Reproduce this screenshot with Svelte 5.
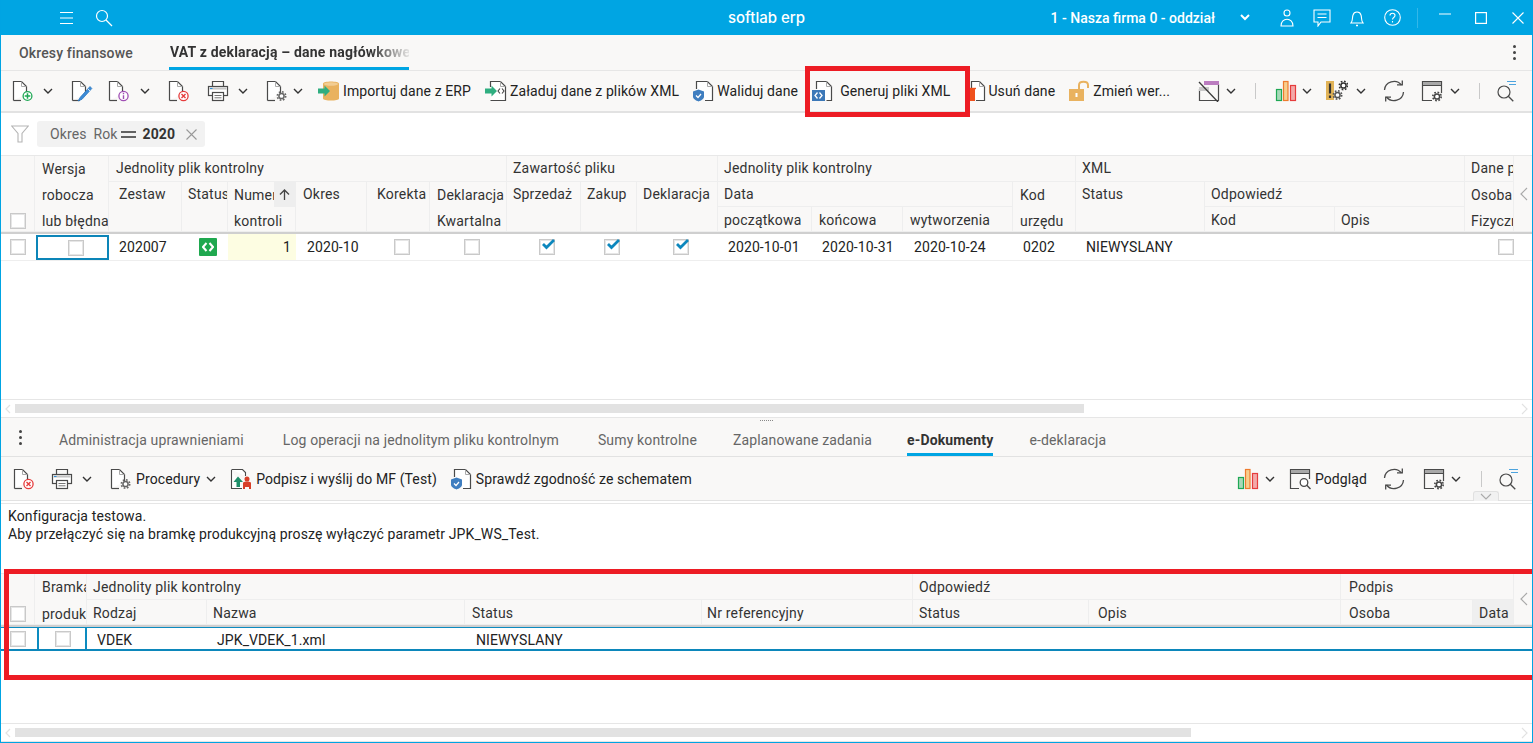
<script>
  const topHead = [
    { t: '', a: '1/1/4/2', cb: true },
    { t: 'Wersja\nrobocza\nlub błędna', a: '1/2/4/3', c: 'p7 l26' },
    { t: 'Jednolity plik kontrolny', a: '1/3/2/9', c: 'p7' },
    { t: 'Zestaw', a: '2/3/4/4', c: 'p10' },
    { t: 'Status', a: '2/4/4/5' },
    { t: 'Numer\nkontroli', a: '2/5/4/6', sort: true, c: 'l26' },
    { t: 'Okres', a: '2/6/4/7', c: 'p7' },
    { t: 'Korekta', a: '2/7/4/8', c: 'p10' },
    { t: 'Deklaracja\nKwartalna', a: '2/8/4/9', c: 'p7 l26' },
    { t: 'Zawartość pliku', a: '1/9/2/12' },
    { t: 'Sprzedaż', a: '2/9/4/10' },
    { t: 'Zakup', a: '2/10/4/11' },
    { t: 'Deklaracja', a: '2/11/4/12' },
    { t: 'Jednolity plik kontrolny', a: '1/12/2/16' },
    { t: 'Data', a: '2/12/3/15' },
    { t: 'początkowa', a: '3/12/4/13', c: 'r3' },
    { t: 'końcowa', a: '3/13/4/14', c: 'p7 r3' },
    { t: 'wytworzenia', a: '3/14/4/15', c: 'p7 r3' },
    { t: 'Kod\nurzędu', a: '2/15/4/16', c: 'p7 l26' },
    { t: 'XML', a: '1/16/2/19' },
    { t: 'Status', a: '2/16/4/17' },
    { t: 'Odpowiedź', a: '2/17/3/19' },
    { t: 'Kod', a: '3/17/4/18', c: 'r3' },
    { t: 'Opis', a: '3/18/4/19', c: 'r3' },
    { t: 'Dane p', a: '1/19/2/20' },
    { t: 'Osoba\nFizyczna', a: '2/19/4/20', c: 'l26' },
    { t: '', a: '1/20/4/21', gut: true }
  ];
  const botHead = [
    { t: '', a: '1/1/3/2', cb: true },
    { t: 'Bramka\nprodukcyjna', a: '1/2/3/3', c: 'p7' },
    { t: 'Jednolity plik kontrolny', a: '1/3/2/7' },
    { t: 'Rodzaj', a: '2/3/3/4' },
    { t: 'Nazwa', a: '2/4/3/5' },
    { t: 'Status', a: '2/5/3/6', c: 'p7' },
    { t: 'Nr referencyjny', a: '2/6/3/7', c: 'p5' },
    { t: 'Odpowiedź', a: '1/7/2/9' },
    { t: 'Status', a: '2/7/3/8' },
    { t: 'Opis', a: '2/8/3/9', c: 'p9' },
    { t: 'Podpis', a: '1/9/2/11', c: 'p8' },
    { t: 'Osoba', a: '2/9/3/10', c: 'p8' },
    { t: 'Data', a: '2/10/3/11', c: 'act' },
    { t: '', a: '1/11/3/12', gut: true }
  ];
  const bottomTabs = [
    { t: 'Administracja uprawnieniami', ml: 37 },
    { t: 'Log operacji na jednolitym pliku kontrolnym', ml: 39 },
    { t: 'Sumy kontrolne', ml: 39 },
    { t: 'Zaplanowane zadania', ml: 36 },
    { t: 'e-Dokumenty', ml: 35, on: true },
    { t: 'e-deklaracja', ml: 36 }
  ];
</script>

{#snippet chev()}
  <svg class="ic" width="10" height="6" viewBox="0 0 10 6"><path d="M1 1l4 4 4-4" fill="none" stroke="#333" stroke-width="1.4"/></svg>
{/snippet}
{#snippet docBase()}
  <path d="M1.5 20.5V1.5h8l5 5v7" fill="#fff" stroke="#4a4a4a" stroke-width="1.2"/>
  <path d="M9.5 1.5v5h5" fill="none" stroke="#aaa" stroke-width="1"/>
  <path d="M1.5 20.5H9" stroke="#4a4a4a" stroke-width="1.2"/>
{/snippet}
{#snippet gear(x, y, c = '#666')}
  <circle cx={x} cy={y} r="2.6" fill="#fff" stroke={c} stroke-width="1.5"/>
  <circle cx={x} cy={y} r="4.2" fill="none" stroke={c} stroke-width="1.6" stroke-dasharray="1.7 1.6"/>
{/snippet}
{#snippet iNew()}
  <svg class="ic" width="22" height="22" viewBox="0 0 22 22">
    {@render docBase()}
    <circle cx="15.5" cy="16" r="4.4" fill="#fff" stroke="#1fa855" stroke-width="1.3"/>
    <path d="M15.500 13.200v5.600M12.700 16h5.600" stroke="#1fa855" stroke-width="1.5"/>
  </svg>
{/snippet}
{#snippet iEdit()}
  <svg class="ic" width="22" height="22" viewBox="0 0 22 22">
    {@render docBase()}
    <path d="M19 6.500L9.500 17l-2.500 4 4-1.700L20.800 8.500z" fill="#3d8bd6" stroke="#2b78c2" stroke-width=".8"/>
    <path d="M17 9l2 2" stroke="#fff" stroke-width=".8"/>
  </svg>
{/snippet}
{#snippet iInfo()}
  <svg class="ic" width="22" height="22" viewBox="0 0 22 22">
    {@render docBase()}
    <circle cx="15.500" cy="16" r="4.600" fill="#fff" stroke="#a04fb4" stroke-width="1.300"/>
    <path d="M15.500 15.200v3.800M15.500 12.800v1.400" stroke="#a04fb4" stroke-width="1.400"/>
  </svg>
{/snippet}
{#snippet iDel()}
  <svg class="ic" width="22" height="22" viewBox="0 0 22 22">
    {@render docBase()}
    <circle cx="15.500" cy="16" r="4.600" fill="#fff" stroke="#e63c3c" stroke-width="1.300"/>
    <path d="M13.500 14l4 4M17.500 14l-4 4" stroke="#e63c3c" stroke-width="1.400"/>
  </svg>
{/snippet}
{#snippet iPrint()}
  <svg class="ic" width="22" height="22" viewBox="0 0 22 22">
    <path d="M5.500 6V1.500h11V6" fill="none" stroke="#4a4a4a" stroke-width="1.200"/>
    <rect x="1.500" y="6.500" width="19" height="9" fill="#fff" stroke="#4a4a4a" stroke-width="1.200"/>
    <rect x="2.500" y="7.500" width="17" height="2" fill="#c4c4c4"/>
    <rect x="3" y="8" width="2.500" height="1" fill="#2f8fd8"/>
    <rect x="5.500" y="12.500" width="11" height="8" fill="#fff" stroke="#4a4a4a" stroke-width="1.200"/>
    <path d="M7.500 15.500h7M7.500 17.800h7" stroke="#777" stroke-width="1"/>
  </svg>
{/snippet}
{#snippet iSet()}
  <svg class="ic" width="22" height="22" viewBox="0 0 22 22">
    {@render docBase()}
    {@render gear(15.5, 16)}
  </svg>
{/snippet}
{#snippet arrow()}
  <path d="M0 8.500h6.500V5.500L12 11l-5.500 5.500v-3H0z" fill="#2fae80"/>
{/snippet}
{#snippet iImport()}
  <svg class="ic" width="22" height="22" viewBox="0 0 22 22">
    <path d="M5 3.500C5 .8 21 .8 21 3.500v15c0 2.700-16 2.700-16 0z" fill="#e9b25f"/>
    <ellipse cx="13" cy="4" rx="7" ry="1.700" fill="#f2cd92"/>
    {@render arrow()}
  </svg>
{/snippet}
{#snippet iLoad()}
  <svg class="ic" width="22" height="22" viewBox="0 0 22 22">
    <path d="M5.500 20.500H20.500V6.500l-5-5h-10V7" fill="#fff" stroke="#4a4a4a" stroke-width="1.200"/>
    <path d="M15.500 1.500v5h5" fill="none" stroke="#aaa"/>
    <path d="M15 8.500l-2 2.500 2 2.500M17 8.500l2 2.500-2 2.500" fill="none" stroke="#444" stroke-width="1.100"/>
    {@render arrow()}
  </svg>
{/snippet}
{#snippet shield()}
  <path d="M1 11.500l5.500-2 5.500 2v5c0 2.500-3 4-5.500 5-2.500-1-5.500-2.500-5.500-5z" fill="#3f7ec0"/>
  <path d="M4 15.500l2 2 3-3.500" fill="none" stroke="#fff" stroke-width="1.200"/>
{/snippet}
{#snippet iValid()}
  <svg class="ic" width="22" height="22" viewBox="0 0 22 22">
    <path d="M4.500 9V1.500h11l5 5v14H13" fill="#fff" stroke="#4a4a4a" stroke-width="1.200"/>
    <path d="M15.500 1.500v5h5" fill="none" stroke="#aaa"/>
    {@render shield()}
  </svg>
{/snippet}
{#snippet iGen()}
  <svg class="ic" width="22" height="22" viewBox="0 0 22 22">
    <path d="M5.500 9V1.500h10l5 5v14h-5" fill="#fff" stroke="#4a4a4a" stroke-width="1.200"/>
    <path d="M15.500 1.500v5h5" fill="none" stroke="#aaa"/>
    <rect x="1" y="10" width="13" height="11" fill="#3c78b8"/>
    <path d="M6.500 12.500l-2.500 3 2.500 3M8.500 12.500l2.500 3-2.500 3" fill="none" stroke="#fff" stroke-width="1.300"/>
  </svg>
{/snippet}
{#snippet iTrash()}
  <svg class="ic" width="22" height="22" viewBox="0 0 22 22">
    <path d="M7.500 9V1.500h8l5 5v14H12" fill="#fff" stroke="#4a4a4a" stroke-width="1.200"/>
    <path d="M15.500 1.500v5h5" fill="none" stroke="#aaa"/>
    <rect x="5" y="9" width="6" height="12" fill="#f0521e"/>
    <path d="M2 8.500h10" stroke="#f0521e" stroke-width="1.400"/>
  </svg>
{/snippet}
{#snippet iLock()}
  <svg class="ic" width="22" height="22" viewBox="0 0 22 22">
    <rect x="1" y="9" width="15" height="12" fill="#e9b25f"/>
    <path d="M11 9V5c0-4.500 9-4.500 9 0v3" fill="none" stroke="#e9b25f" stroke-width="2"/>
    <rect x="7.500" y="13" width="2" height="4" fill="#fff"/>
  </svg>
{/snippet}
{#snippet iGridOff()}
  <svg class="ic" width="22" height="22" viewBox="0 0 22 22">
    <path d="M1.500 9v11.500h19V4.500H8" fill="none" stroke="#4a4a4a" stroke-width="1.200"/>
    <rect x="6" y="1" width="15" height="4" fill="#bb7dc0"/>
    <rect x="1" y="7" width="10" height="4" fill="#c9c9c9"/>
    <path d="M1 2l19 20" stroke="#3a3a3a" stroke-width="1.300"/>
  </svg>
{/snippet}
{#snippet iBars()}
  <svg class="ic" width="22" height="22" viewBox="0 0 22 22">
    <rect x="1.500" y="9.500" width="5" height="11" fill="#a6d9b8" stroke="#1fa855" stroke-width="1.200"/>
    <rect x="8.500" y="1.500" width="4.500" height="19" fill="#f7ce8d" stroke="#ee7b2e" stroke-width="1.200"/>
    <rect x="15.500" y="5.500" width="5" height="15" fill="#f3a9a9" stroke="#e63c3c" stroke-width="1.200"/>
  </svg>
{/snippet}
{#snippet iWarn()}
  <svg class="ic" width="22" height="22" viewBox="0 0 22 22">
    <rect x="0" y="1" width="8" height="19" fill="#e2b458"/>
    <path d="M4 3.500v10M4 15.500v2.500" stroke="#333" stroke-width="2.200"/>
    {@render gear(11.5, 15, '#555')}
    {@render gear(17.5, 5.5, '#333')}
  </svg>
{/snippet}
{#snippet iRefresh()}
  <svg class="ic" width="22" height="22" viewBox="0 0 22 22">
    <path d="M1.500 10A9.500 9 0 0 1 18.500 5" fill="none" stroke="#4a4a4a" stroke-width="1.300"/>
    <path d="M20.500 12A9.500 9 0 0 1 3.500 17" fill="none" stroke="#4a4a4a" stroke-width="1.300"/>
    <path d="M14 4.800h5.300V0.500" fill="none" stroke="#4a4a4a" stroke-width="1.300"/>
    <path d="M8 17.200H2.700v4.300" fill="none" stroke="#4a4a4a" stroke-width="1.300"/>
  </svg>
{/snippet}
{#snippet iWin()}
  <svg class="ic" width="22" height="22" viewBox="0 0 22 22">
    <path d="M11 20.500H1.500v-19h19V13" fill="none" stroke="#4a4a4a" stroke-width="1.200"/>
    <rect x="2" y="2" width="18" height="3.500" fill="#a8a8a8"/>
    <path d="M1.500 5.500h19" stroke="#4a4a4a" stroke-width="1"/>
    {@render gear(16, 16.5, '#444')}
  </svg>
{/snippet}
{#snippet iPreview()}
  <svg class="ic" width="22" height="22" viewBox="0 0 22 22">
    <path d="M10 20.500H1.500v-19h19V11" fill="none" stroke="#4a4a4a" stroke-width="1.200"/>
    <rect x="2" y="2" width="18" height="3.500" fill="#a8a8a8"/>
    <path d="M1.500 5.500h19" stroke="#4a4a4a" stroke-width="1"/>
    <circle cx="15" cy="14.500" r="3.800" fill="#fff" stroke="#4a4a4a" stroke-width="1.300"/>
    <path d="M17.800 17.300l3.700 3.700" stroke="#4a4a4a" stroke-width="1.400"/>
  </svg>
{/snippet}
{#snippet iSearch()}
  <svg class="ic" width="22" height="22" viewBox="0 0 22 22">
    <circle cx="9" cy="12" r="6" fill="none" stroke="#4a4a4a" stroke-width="1.200"/>
    <path d="M13.300 16.300l5 5" stroke="#4a4a4a" stroke-width="1.300"/>
    <path d="M12 1.500h9M14 4.500h7" stroke="#4da4de" stroke-width="1.200"/>
  </svg>
{/snippet}
{#snippet iSign()}
  <svg class="ic" width="22" height="22" viewBox="0 0 22 22">
    <path d="M1.500 2v18.500H12M1.500 1.500h11l3 3V8" fill="#fff" stroke="#4a4a4a" stroke-width="1.100"/>
    <path d="M8 8.500l5 5.500H10v5H6.500v-5H3.500z" fill="#1f8f6a"/>
    <circle cx="17" cy="11" r="2.500" fill="#d8402a"/>
    <path d="M13 21v-6c0-2 8-2 8 0v6h-2v-2h-4v2z" fill="#d8402a"/>
  </svg>
{/snippet}

{#snippet box(on = false)}
  <span class="box">
    {#if on}
      <svg class="tick" width="15" height="12" viewBox="0 0 15 12"><path d="M2 6l3.500 3.500L13 2" fill="none" stroke="#0c87bd" stroke-width="2.800"/></svg>
    {/if}
  </span>
{/snippet}

{#snippet head(cells, cls)}
  <div class="head {cls}">
    {#each cells as c}
      <div class={['hc', c.c, c.gut && 'gut']} style:grid-area={c.a}>
        {#if c.cb}
          {@render box()}
        {:else if c.gut}
          <svg width="9" height="14" viewBox="0 0 9 14"><path d="M8 1L2 7l6 6" fill="none" stroke="#a9a9a9" stroke-width="1.200"/></svg>
        {:else}
          <span class="ht">{c.t}</span>
        {/if}
        {#if c.sort}
          <span class="sort"><svg width="11" height="11" viewBox="0 0 11 11"><path d="M5.500 11V1.500M1 5.500l4.500-4.500 4.500 4.500" fill="none" stroke="#444" stroke-width="1.300"/></svg></span>
        {/if}
      </div>
    {/each}
  </div>
{/snippet}

{#snippet scrollbar(cls)}
  <div class="scroll">
    <svg width="7" height="10" viewBox="0 0 7 10"><path d="M6 1L2 5l4 4" fill="none" stroke="#e2e2e2" stroke-width="1.200"/></svg>
    <div class="track"><div class="thumb {cls}"></div></div>
    <svg width="7" height="12" viewBox="0 0 7 12"><path d="M1 1l5 5-5 5" fill="none" stroke="#e2e2e2" stroke-width="1.200"/></svg>
  </div>
{/snippet}

<div class="win">
  <header class="top">
    <div class="top-l">
      <svg class="menu" width="14" height="12" viewBox="0 0 14 12"><path d="M0 .5h13M0 6h13M0 11.500h13" stroke="#fff" stroke-width="1"/></svg>
      <svg class="find" width="18" height="18" viewBox="0 0 18 18"><circle cx="7" cy="7" r="5.500" fill="none" stroke="#fff" stroke-width="1.200"/><path d="M11 11l6 6" stroke="#fff" stroke-width="1.200"/></svg>
    </div>
    <div class="title">softlab erp</div>
    <div class="top-r">
      <span class="firm">1 - Nasza firma 0 - oddział</span>
      <svg class="firm-chev" width="10" height="7" viewBox="0 0 10 7"><path d="M1 1l4 4 4-4" fill="none" stroke="#fff" stroke-width="2"/></svg>
      <svg class="t-user" width="14" height="18" viewBox="0 0 14 18"><circle cx="7" cy="4" r="3" fill="none" stroke="#fff" stroke-width="1.100"/><path d="M1 17c0-9 12-9 12 0z" fill="none" stroke="#fff" stroke-width="1.100"/></svg>
      <svg class="t-chat" width="18" height="18" viewBox="0 0 18 18"><path d="M1 1h16v12H8l-3 4v-4H1z" fill="none" stroke="#fff" stroke-width="1.100"/><path d="M4.500 5h9M4.500 8.500h9" stroke="#fff" stroke-width="1"/></svg>
      <svg class="t-bell" width="14" height="18" viewBox="0 0 14 18"><path d="M1 14c2-2 1-5 2-8 1-4 7-4 8 0 1 3 0 6 2 8z" fill="none" stroke="#fff" stroke-width="1.100"/><path d="M6 16.500h2" stroke="#fff" stroke-width="1.400"/></svg>
      <svg class="t-help" width="17" height="17" viewBox="0 0 17 17"><circle cx="8.500" cy="8.500" r="7.800" fill="none" stroke="#fff" stroke-width="1.100"/><path d="M6 6.500c0-3 5-3 5 0 0 2-2.500 2-2.500 4M8.500 12v1.500" fill="none" stroke="#fff" stroke-width="1.100"/></svg>
      <span class="t-sep"></span>
      <svg class="t-min" width="12" height="2" viewBox="0 0 12 2"><path d="M0 1h12" stroke="#cfeefb" stroke-width="1.200"/></svg>
      <svg class="t-max" width="12" height="12" viewBox="0 0 12 12"><rect x=".6" y=".6" width="10.800" height="10.800" fill="none" stroke="#fff" stroke-width="1.200"/></svg>
      <svg class="t-close" width="12" height="12" viewBox="0 0 12 12"><path d="M.5.500l11 11M11.500.500l-11 11" stroke="#fff" stroke-width="1.100"/></svg>
    </div>
  </header>

  <nav class="tabs">
    <span class="tab1">Okresy finansowe</span>
    <span class="tab2"><span class="fade">VAT z deklaracją – dane nagłówkowe</span></span>
    <span class="kebab"><i></i><i></i><i></i></span>
  </nav>

  <div class="bar bar1">
    <span class="g11">{@render iNew()}</span>
    <span class="g9">{@render chev()}</span>
    <span class="g18">{@render iEdit()}</span>
    <span class="g15">{@render iInfo()}</span>
    <span class="g10">{@render chev()}</span>
    <span class="g18">{@render iDel()}</span>
    <span class="g17">{@render iPrint()}</span>
    <span class="g9">{@render chev()}</span>
    <span class="g18">{@render iSet()}</span>
    <span class="g5">{@render chev()}</span>
    <span class="g15">{@render iImport()}</span>
    <span class="g3 tx">Importuj dane z ERP</span>
    <span class="g14">{@render iLoad()}</span>
    <span class="g3 tx">Załaduj dane z plików XML</span>
    <span class="g13">{@render iValid()}</span>
    <span class="g3 tx">Waliduj dane</span>
    <span class="g13">{@render iGen()}</span>
    <span class="g7 tx">Generuj pliki XML</span>
    <span class="g14">{@render iTrash()}</span>
    <span class="g2 tx">Usuń dane</span>
    <span class="g13">{@render iLock()}</span>
    <span class="g3 tx">Zmień wer...</span>
    <span class="g28">{@render iGridOff()}</span>
    <span class="g6">{@render chev()}</span>
    <span class="g19 sep"></span>
    <span class="g19">{@render iBars()}</span>
    <span class="g5">{@render chev()}</span>
    <span class="g14">{@render iWarn()}</span>
    <span class="g8">{@render chev()}</span>
    <span class="g17">{@render iRefresh()}</span>
    <span class="g16">{@render iWin()}</span>
    <span class="g7">{@render chev()}</span>
    <span class="g19 sep"></span>
    <span class="g15">{@render iSearch()}</span>
  </div>

  <div class="filter">
    <svg width="18" height="18" viewBox="0 0 18 18"><path d="M.7 1h16.600l-6.300 7.500v8.500h-4v-8.500z" fill="none" stroke="#b5b5b5" stroke-width="1.100"/></svg>
    <div class="chip">
      <span class="c-a">Okres</span><span class="c-b">Rok</span>
      <svg class="eq" width="15" height="7" viewBox="0 0 15 7"><path d="M0 1h15M0 6h15" stroke="#333" stroke-width="1.300"/></svg>
      <b>2020</b>
      <svg class="cx" width="11" height="11" viewBox="0 0 11 11"><path d="M.5.500l10 10M10.500.500l-10 10" stroke="#999" stroke-width="1.100"/></svg>
    </div>
  </div>

  <section class="grid-top">
    {@render head(topHead, 'cols-a rows-3')}
    <div class="row cols-a">
      <div class="dc c1">{@render box()}</div>
      <div class="dc c2 focus">{@render box()}</div>
      <div class="dc c3 tl">202007</div>
      <div class="dc c4 off"><span class="status"><svg width="12" height="10" viewBox="0 0 12 10"><path d="M4.500 1L1 5l3.500 4M7.500 1L11 5 7.500 9" fill="none" stroke="#fff" stroke-width="2"/></svg></span></div>
      <div class="dc c5 num">1</div>
      <div class="dc c6 tl">2020-10</div>
      <div class="dc c7 off">{@render box()}</div>
      <div class="dc c8 off">{@render box()}</div>
      <div class="dc c9 off">{@render box(true)}</div>
      <div class="dc c10 off">{@render box(true)}</div>
      <div class="dc c11 off">{@render box(true)}</div>
      <div class="dc c12 tl">2020-10-01</div>
      <div class="dc c13 tl">2020-10-31</div>
      <div class="dc c14 tl">2020-10-24</div>
      <div class="dc c15 tl">0202</div>
      <div class="dc c16 tl">NIEWYSLANY</div>
      <div class="dc c19">{@render box()}</div>
    </div>
    <div class="fill"></div>
    {@render scrollbar('th-a')}
  </section>

  <div class="split"><span></span></div>

  <nav class="tabs2">
    <span class="kebab k2"><i></i><i></i><i></i></span>
    {#each bottomTabs as t}
      <span class={['t2', t.on && 'on']} style:margin-left="{t.ml}px">{t.t}</span>
    {/each}
  </nav>

  <div class="bar bar2">
    <span class="g12">{@render iDel()}</span>
    <span class="g16">{@render iPrint()}</span>
    <span class="g9">{@render chev()}</span>
    <span class="g18">{@render iSet()}</span>
    <span class="g4 tx">Procedury</span>
    <span class="g6">{@render chev()}</span>
    <span class="g14">{@render iSign()}</span>
    <span class="g4 tx">Podpisz i wyślij do MF (Test)</span>
    <span class="g13">{@render iValid()}</span>
    <span class="g4 tx">Sprawdź zgodność ze schematem</span>
    <span class="push">{@render iBars()}</span>
    <span class="g6">{@render chev()}</span>
    <span class="g14">{@render iPreview()}</span>
    <span class="g4 tx">Podgląd</span>
    <span class="g16">{@render iRefresh()}</span>
    <span class="g18">{@render iWin()}</span>
    <span class="g6">{@render chev()}</span>
    <span class="g20 sep"></span>
    <span class="g15">{@render iSearch()}</span>
    <span class="r34"></span>
    <span class="collapse"><svg width="12" height="7" viewBox="0 0 12 7"><path d="M1 1l5 5 5-5" fill="none" stroke="#aaa" stroke-width="1.100"/></svg></span>
  </div>

  <div class="msg">Konfiguracja testowa.<br>Aby przełączyć się na bramkę produkcyjną proszę wyłączyć parametr JPK_WS_Test.</div>

  <section class="grid-bot">
    {@render head(botHead, 'cols-b rows-2')}
    <div class="row2 cols-b">
      <div class="dc c1">{@render box()}</div>
      <div class="dc c2 focus2">{@render box()}</div>
      <div class="dc c3 tl">VDEK</div>
      <div class="dc c4 tl">JPK_VDEK_1.xml</div>
      <div class="dc c5 tl">NIEWYSLANY</div>
    </div>
    <div class="fill"></div>
    {@render scrollbar('th-b')}
  </section>

  <div class="mark mark1"></div>
  <div class="mark mark2"></div>
</div>

<style>
  :global(body) { margin: 0; background: #fff; }
  .win {
    position: relative; width: 1533px; height: 743px; box-sizing: border-box; overflow: hidden;
    border: 1px solid #00a4e3; border-top: 0; display: flex; flex-direction: column;
    font: 14px/18px Roboto, "Liberation Sans", sans-serif; color: #222; letter-spacing: .1px; background: #fff;
  }
  .ic { display: block; }
  .top { margin: 0 -1px; height: 35px; flex: none; background: #00a5e3; color: #fff; display: grid; grid-template-columns: 1fr auto 1fr; align-items: center; }
  .top-l, .top-r { display: flex; align-items: center; }
  .menu { margin-left: 60px; }
  .find { margin-left: 21px; }
  .title { font: 500 15px Inter, Lato, sans-serif; letter-spacing: 0; }
  .top-r { justify-content: flex-end; padding-right: 9px; }
  .firm { font-weight: 500; letter-spacing: 0; }
  .firm-chev { margin-left: 25px; }
  .t-user { margin-left: 30px; } .t-chat { margin-left: 19px; } .t-bell { margin-left: 19px; }
  .t-help { margin-left: 20px; } .t-sep { width: 1px; height: 20px; background: #33b7e9; margin-left: 16px; }
  .t-min { margin-left: 21px; align-self: flex-end; margin-bottom: 13px; } .t-max { margin-left: 24px; } .t-close { margin-left: 25px; }

  .tabs { height: 36px; box-sizing: border-box; flex: none; background: #f9f8f7; border-bottom: 1px solid #e6e6e6; display: flex; align-items: center; position: relative; }
  .tab1 { margin-left: 18px; color: #555; font-weight: 500; letter-spacing: .15px; }
  .tab2 { margin-left: 36px; width: 240px; height: 35px; line-height: 34px; box-sizing: border-box; border-bottom: 3px solid #00a5e3; overflow: hidden; font-weight: 700; color: #333; letter-spacing: .2px; padding-left: 1px; }
  .fade { display: block; white-space: nowrap; -webkit-mask-image: linear-gradient(to right, #000 84%, rgba(0,0,0,.1) 100%); mask-image: linear-gradient(to right, #000 84%, rgba(0,0,0,.1) 100%); }
  .kebab { margin-left: auto; margin-right: 16px; display: flex; flex-direction: column; gap: 3px; }
  .kebab i { width: 3px; height: 3px; border-radius: 50%; background: #444; display: block; }
  .k2 { margin: 0 0 0 18px; }

  .bar { flex: none; box-sizing: border-box; background: #f9f8f7; display: flex; align-items: center; position: relative; white-space: nowrap; }
  .bar1 { height: 42px; border-bottom: 2px solid #e2e2e2; }
  .bar2 { height: 44px; border-bottom: 1px solid #e2e2e2; }
  .tx { color: #222; }
  .sep { width: 1px; height: 16px; background: #c9c9c9; }
  .g2 { margin-left: 2px; } .g3 { margin-left: 3px; } .g4 { margin-left: 4px; } .g5 { margin-left: 5px; } .g6 { margin-left: 6px; }
  .g7 { margin-left: 7px; } .g8 { margin-left: 8px; } .g9 { margin-left: 9px; } .g10 { margin-left: 10px; } .g11 { margin-left: 11px; }
  .g12 { margin-left: 12px; } .g13 { margin-left: 13px; } .g14 { margin-left: 14px; } .g15 { margin-left: 15px; } .g16 { margin-left: 16px; }
  .g17 { margin-left: 17px; } .g18 { margin-left: 18px; } .g19 { margin-left: 19px; } .g20 { margin-left: 20px; } .g28 { margin-left: 28px; }
  .push { margin-left: auto; }
  .r34 { width: 13px; }
  .collapse { position: absolute; left: 1472px; bottom: -1px; width: 26px; height: 10px; box-sizing: border-box; background: #f1f1f1; border: 1px solid #e0e0e0; border-bottom: 0; border-radius: 3px 3px 0 0; display: flex; align-items: center; justify-content: center; }

  .filter { height: 42px; flex: none; display: flex; align-items: center; padding-left: 10px; }
  .chip { margin-left: 8px; width: 168px; height: 26px; box-sizing: border-box; background: #f2f2f2; border-radius: 3px; display: flex; align-items: center; padding-left: 13px; color: #666; }
  .c-b { margin-left: 7px; }
  .eq { margin-left: 3px; }
  .chip b { margin-left: 7px; color: #333; font-weight: 700; }
  .cx { margin-left: 11px; }

  .grid-top { height: 263px; flex: none; display: flex; flex-direction: column; }
  .grid-bot { flex: 1; display: flex; flex-direction: column; min-height: 0; }
  .cols-a { display: grid; grid-template-columns: 34px 74px 73px 46px 68px 71px 63px 77px 74px 56px 81px 94px 91px 110px 63px 129px 130px 130px 49px 1fr; }
  .cols-b { display: grid; grid-template-columns: 34px 52px 120px 258px 237px 211px 176px 252px 132px 41px 1fr; }
  .head { background: #f9f8f7; border-top: 1px solid #e8e8e8; flex: none; color: #333; letter-spacing: .2px; }
  .rows-3 { grid-template-rows: 26px 25px 25px; border-bottom: 2px solid #cfcfcf; }
  .rows-2 { grid-template-rows: 26px 25px; border-bottom: 2px solid #cfcfcf; }
  .hc { position: relative; box-sizing: border-box; overflow: hidden; border-right: 1px solid #eeeeee; border-bottom: 1px solid #eeeeee; padding-left: 6px; line-height: 25px; }
  .rows-2 .hc { line-height: 27px; }
  .hc.l26 { line-height: 26px; }
  .hc.r3 { padding-top: 1px; }
  .hc:has(> .box) { display: flex; align-items: flex-end; padding: 0 0 2px 9px; }
  .ht { display: block; white-space: pre; }
  .p10 { padding-left: 10px; } .p9 { padding-left: 9px; } .p8 { padding-left: 8px; } .p7 { padding-left: 7px; } .p5 { padding-left: 5px; }
  .act { background: #efefef; }
  .gut { display: flex; align-items: center; justify-content: center; padding: 0; border-right: 0; }
  .sort { position: absolute; right: 0; top: 0; width: 21px; height: 25px; background: #eeeeee; display: flex; align-items: center; justify-content: center; }

  .box { width: 16px; height: 16px; box-sizing: border-box; border: 1px solid #c9c9c9; background: #fff; display: block; position: relative; box-shadow: inset 0 0 0 1px #e6e6e6; flex: none; }
  .tick { position: absolute; left: 1px; top: -2px; }

  .row { height: 27px; border-bottom: 1px solid #eee; box-sizing: border-box; flex: none; }
  .row2 { height: 24px; border-top: 1px solid #0c8bc0; border-bottom: 2px solid #0c87bb; box-sizing: border-box; flex: none; margin: 0 -1px; padding-left: 1px; }
  .dc { display: flex; align-items: center; justify-content: center; min-width: 0; white-space: nowrap; }
  .off { padding-left: 6px; }
  .tl { justify-content: flex-start; padding-left: 10px; }
  .c1 { grid-column: 1; justify-content: flex-start; padding-left: 9px; }
  .c2 { grid-column: 2; } .c3 { grid-column: 3; } .c4 { grid-column: 4; } .c5 { grid-column: 5; } .c6 { grid-column: 6; }
  .c7 { grid-column: 7; } .c8 { grid-column: 8; } .c9 { grid-column: 9; } .c10 { grid-column: 10; } .c11 { grid-column: 11; }
  .c12 { grid-column: 12; } .c13 { grid-column: 13; } .c14 { grid-column: 14; } .c15 { grid-column: 15; } .c16 { grid-column: 16; } .c19 { grid-column: 19; justify-content: flex-end; }
  .focus { border: 2px solid #0c85b8; margin: 1px 0 0 1px; box-sizing: border-box; padding-left: 6px; }
  .focus2 { border-left: 2px solid #0c8bc0; border-right: 2px solid #0c8bc0; margin-left: 2px; box-sizing: border-box; padding-left: 2px; }
  .row2 .tl { padding-top: 2px; }
  .cols-b .c5.tl { padding-left: 11px; } .cols-a .c6.tl { padding-left: 11px; } .cols-a .c14.tl { padding-left: 11px; } .cols-a .c12.tl { padding-left: 10px; }
  .status { width: 18px; height: 18px; background: #1fa84f; display: flex; align-items: center; justify-content: center; border-radius: 1px; }
  .num { background: #fdfde2; justify-content: flex-end; padding-right: 5px; }

  .fill { flex: 1; }
  .scroll { height: 19px; flex: none; box-sizing: border-box; border-top: 1px solid #e6e6e6; border-bottom: 1px solid #e6e6e6; display: flex; align-items: center; padding: 0 4px 0 3px; gap: 4px; }
  .track { flex: 1; height: 9px; }
  .thumb { height: 9px; background: #e2e2e2; }
  .th-a { width: 1069px; } .th-b { width: 1176px; }

  .split { height: 0; flex: none; position: relative; }
  .split span { position: absolute; left: 759px; top: 2px; width: 13px; height: 1px; border-top: 1px dotted #888; }
  .tabs2 { height: 39px; box-sizing: border-box; flex: none; background: #f9f8f7; border-bottom: 1px solid #e2e2e2; display: flex; align-items: center; color: #666; white-space: nowrap; letter-spacing: .15px; }
  .t2 { height: 38px; line-height: 44px; box-sizing: border-box; }
  .t2.on { color: #333; font-weight: 700; border-bottom: 3px solid #00a5e3; }

  .msg { height: 70px; flex: none; box-sizing: border-box; border-top: 1px solid #e6e6e6; margin-top: 2px; padding: 3px 0 0 7px; letter-spacing: .13px; color: #222; }

  .mark { position: absolute; border: 5px solid #ed1c24; box-sizing: border-box; pointer-events: none; }
  .mark1 { left: 804px; top: 66px; width: 165px; height: 51px; }
  .mark2 { left: 3px; top: 569px; width: 1540px; height: 111px; }
</style>
